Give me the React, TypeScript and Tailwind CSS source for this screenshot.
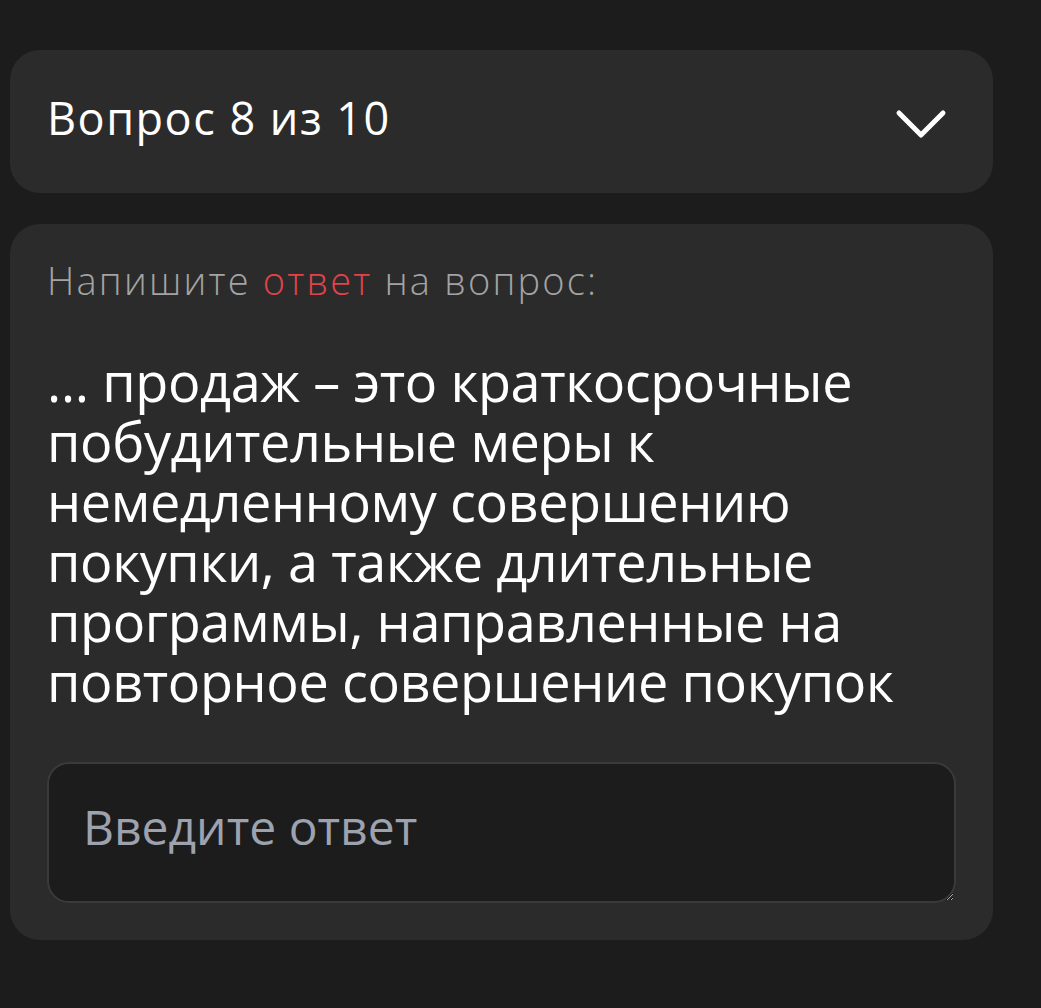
export default function App() {
    return (
        <div className="min-h-[1008px] w-full bg-[#1c1c1c] pt-[50px] pl-[10px] pr-[48px] font-['Open_Sans',sans-serif]">
            <div className="flex flex-col gap-[31px]">
                <div className="h-[143px] rounded-[30px] bg-[#2b2b2b] pl-[37px] pr-[45px] flex items-center justify-between">
                    <h1 className="text-[45px] leading-none tracking-[1.5px] text-white font-normal -mt-[8px]">Вопрос 8 из 10</h1>
                    <svg width="54" height="34" viewBox="0 0 54 34" fill="none" className="mt-[6px]">
                        <polyline points="5,5 27,27 49,5" stroke="white" strokeWidth="5" strokeLinecap="round" strokeLinejoin="round" />
                    </svg>
                </div>

                <div className="rounded-[30px] bg-[#2b2b2b] px-[37px] pt-[34px] pb-[37px]">
                    <p className="text-[38px] leading-[44px] tracking-[2.2px] font-light text-[#a3a3a3]">
                        Напишите <span className="text-[#e2434b]">ответ</span> на вопрос:
                    </p>
                    <p className="mt-[49px] text-[54px] leading-[60px] tracking-[-0.4px] text-white font-normal">
                        … продаж – это краткосрочные<br />
                        побудительные меры к<br />
                        немедленному совершению<br />
                        покупки, а также длительные<br />
                        программы, направленные на<br />
                        повторное совершение покупок
                    </p>
                    <textarea
                        placeholder="Введите ответ"
                        className="mt-[51px] block w-full h-[141px] rounded-[22px] border-2 border-[#3a3a3a] bg-[#1c1c1c] pl-[34px] pr-[34px] pt-[39px] text-[48px] leading-[48px] text-white placeholder:text-[#9ca3af] outline-none"
                    />
                </div>
            </div>
        </div>
    );
}
